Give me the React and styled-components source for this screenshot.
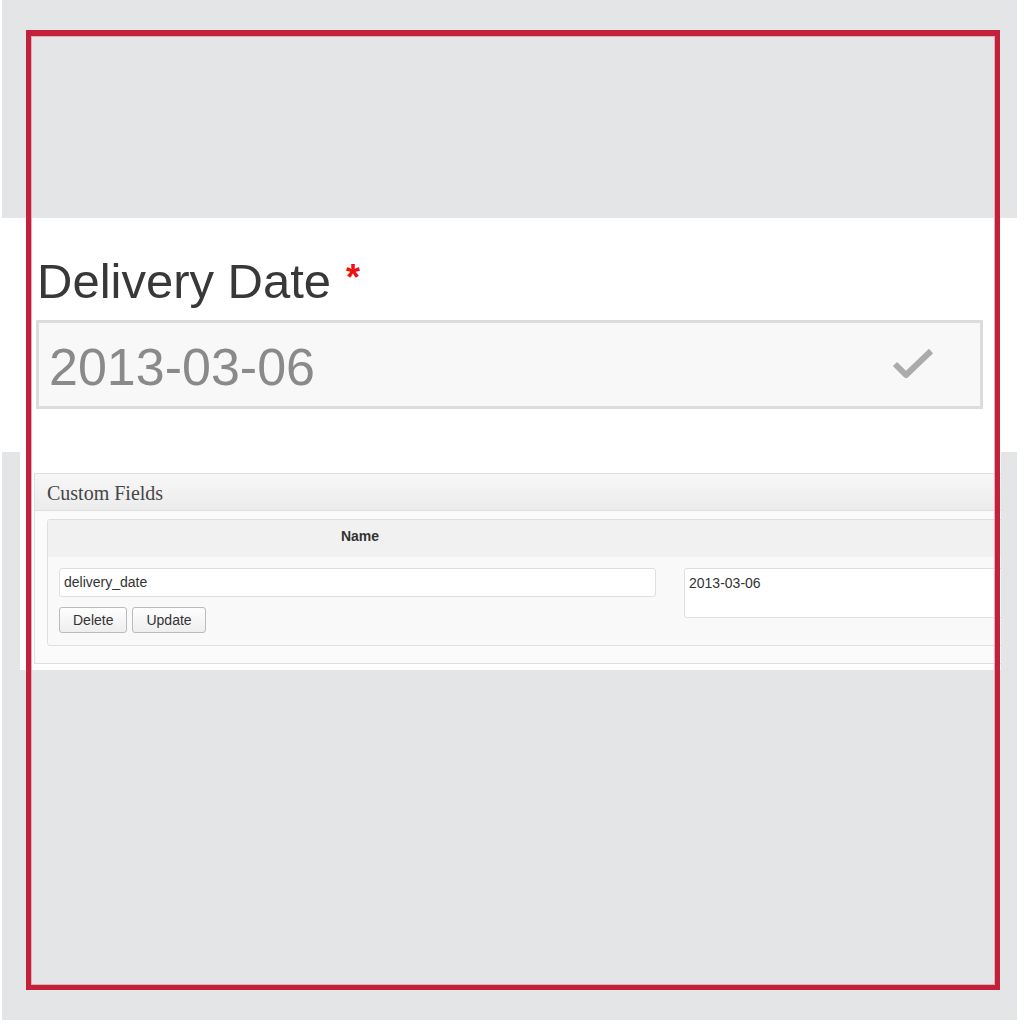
import React from "react";
import styled, { createGlobalStyle } from "styled-components";

const GlobalStyle = createGlobalStyle`
  html, body {
    margin: 0;
    padding: 0;
    background: #ffffff;
  }
  body {
    font-family: "Liberation Sans", Arial, sans-serif;
  }
`;

const Canvas = styled.div`
  position: relative;
  margin-left: 2px;
  width: 1015px;
  height: 1020px;
  background: #e4e5e7;
  padding-top: 218px;
  box-sizing: border-box;
`;

const Frame = styled.div`
  position: absolute;
  left: 24px;
  top: 30px;
  width: 974px;
  height: 960px;
  box-sizing: border-box;
  border: 5px solid #c1213a;
  border-top-width: 6px;
  box-shadow: inset 0 0 0 1px #eaa9b4;
  pointer-events: none;
`;

/* delivery date field */
const FieldBlock = styled.section`
  background: #ffffff;
  height: 234px;
  margin-right: -7px;
  padding: 39px 0 0 35px;
  box-sizing: border-box;
`;

const FieldLabel = styled.label`
  display: flex;
  align-items: flex-start;
  font-size: 49px;
  line-height: 49px;
  color: #383838;
`;

const Required = styled.span`
  color: #f01010;
  font-size: 36px;
  font-weight: bold;
  line-height: 36px;
  margin: 3px 0 0 15px;
`;

const DateInput = styled.div`
  margin: 14px 0 0 -1px;
  width: 947px;
  height: 89px;
  box-sizing: border-box;
  border: 3px solid #dcdcdc;
  background: #f8f8f8;
  display: flex;
  align-items: center;
  justify-content: space-between;
  padding: 5px 46px 0 10px;
  font-size: 52px;
  color: #8a8a8a;
`;

const CheckIcon = () => (
  <svg width="42" height="34" viewBox="0 0 42 34" style={{ marginTop: -6 }}>
    <path
      d="M3 17 L14 28 L39 4"
      fill="none"
      stroke="#ababab"
      strokeWidth="6"
      strokeLinejoin="round"
    />
  </svg>
);

/* custom fields meta box */
const MetaBlock = styled.section`
  background: #ffffff;
  margin-left: 18px;
  width: 981px;
  height: 218px;
  padding-top: 21px;
  box-sizing: border-box;
  overflow: hidden;
`;

const Panel = styled.div`
  margin-left: 14px;
  width: 990px;
  border: 1px solid #dfdfdf;
  background: #fbfbfb;
`;

const PanelHeader = styled.h3`
  margin: 0;
  height: 37px;
  box-sizing: border-box;
  padding: 8px 0 0 12px;
  background: linear-gradient(#f7f7f7, #ececec);
  border-bottom: 1px solid #dfdfdf;
  font-family: "Liberation Serif", Georgia, serif;
  font-weight: normal;
  font-size: 20px;
  line-height: 22px;
  color: #464646;
`;

const PanelBody = styled.div`
  padding: 8px 0 17px 12px;
`;

const FieldTable = styled.div`
  border: 1px solid #dfdfdf;
  border-radius: 3px;
  background: #f9f9f9;
`;

const TableHead = styled.div`
  display: grid;
  grid-template-columns: 624px 1fr;
  height: 37px;
  box-sizing: border-box;
  padding-bottom: 5px;
  align-items: center;
  background: #f1f1f1;
  font-size: 14px;
  font-weight: bold;
  color: #333333;
  text-align: center;
`;

const TableRow = styled.div`
  display: grid;
  grid-template-columns: 624px 1fr;
  padding: 11px 0 12px;
`;

const KeyCell = styled.div`
  padding-left: 11px;
  display: flex;
  flex-direction: column;
  gap: 10px;
`;

const TextBox = styled.div`
  box-sizing: border-box;
  width: ${(p) => p.$width || "auto"};
  height: ${(p) => p.$height}px;
  border: 1px solid #dfdfdf;
  border-radius: 3px;
  background: #ffffff;
  padding: ${(p) => p.$pad || "5px 4px"};
  font-size: 14px;
  line-height: 16px;
  color: #333333;
`;

const ButtonRow = styled.div`
  display: flex;
  gap: 5px;
`;

const Button = styled.button`
  height: 26px;
  padding: 0 13px;
  border: 1px solid #bbbbbb;
  border-radius: 3px;
  background: linear-gradient(#fefefe, #eeeeee);
  font-family: "Liberation Sans", Arial, sans-serif;
  font-size: 14px;
  color: #333333;
`;

const ValueCell = styled.div`
  padding-left: 12px;
`;

export default function App() {
  return (
    <>
      <GlobalStyle />
      <Canvas>
        <FieldBlock>
          <FieldLabel>
            Delivery Date
            <Required>*</Required>
          </FieldLabel>
          <DateInput>
            2013-03-06
            <CheckIcon />
          </DateInput>
        </FieldBlock>

        <MetaBlock>
          <Panel>
            <PanelHeader>Custom Fields</PanelHeader>
            <PanelBody>
              <FieldTable>
                <TableHead>
                  <div>Name</div>
                  <div />
                </TableHead>
                <TableRow>
                  <KeyCell>
                    <TextBox $width="597px" $height={29}>
                      delivery_date
                    </TextBox>
                    <ButtonRow>
                      <Button>Delete</Button>
                      <Button>Update</Button>
                    </ButtonRow>
                  </KeyCell>
                  <ValueCell>
                    <TextBox $height={50} $pad="6px 4px">
                      2013-03-06
                    </TextBox>
                  </ValueCell>
                </TableRow>
              </FieldTable>
            </PanelBody>
          </Panel>
        </MetaBlock>

        <Frame />
      </Canvas>
    </>
  );
}
